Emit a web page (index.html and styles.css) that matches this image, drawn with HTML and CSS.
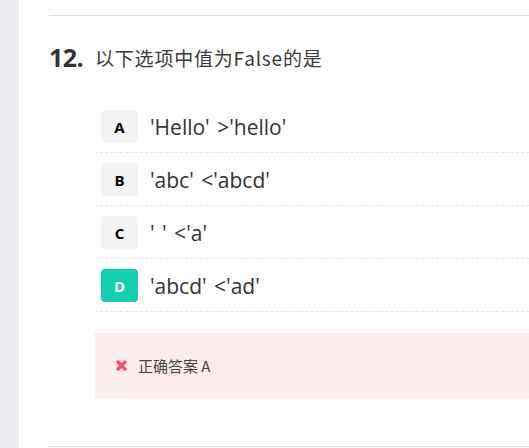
FILE: index.html
```html
<!DOCTYPE html>
<html lang="zh-CN">
<head>
<meta charset="utf-8">
<link rel="stylesheet" href="styles.css">
</head>
<body>
<div class="page">
  <aside class="side"></aside>
  <main class="main">
    <section class="question">
      <div class="q-head">
        <span class="q-num">12.</span>
        <span class="q-title">以下选项中值为False的是</span>
      </div>
      <ul class="options">
        <li class="option"><span class="badge">A</span><span class="opt-text">'Hello' &gt;'hello'</span></li>
        <li class="option"><span class="badge">B</span><span class="opt-text">'abc' &lt;'abcd'</span></li>
        <li class="option"><span class="badge">C</span><span class="opt-text">' ' &lt;'a'</span></li>
        <li class="option"><span class="badge badge-on">D</span><span class="opt-text">'abcd' &lt;'ad'</span></li>
      </ul>
      <div class="answer">
        <svg class="x-icon" width="11" height="11" viewBox="0 0 11 11"><path d="M2 2 L9 9 M9 2 L2 9" stroke="#fd4a68" stroke-width="3.2" stroke-linecap="round"/></svg>
        <span class="answer-text">正确答案 A</span>
      </div>
    </section>
  </main>
</div>
</body>
</html>
```
FILE: styles.css
```css
html, body {
  margin: 0;
  padding: 0;
  background: #fff;
}
body {
  font-family: "Open Sans", "Noto Sans CJK SC", sans-serif;
  color: #333;
  overflow: hidden;
}
.page {
  display: flex;
  height: 448px;
}
.side {
  width: 19px;
  flex: none;
  background: linear-gradient(to right, #ebecf0 0, #ebecf0 10px, #edeef2 19px);
}
.main {
  flex: 1;
  padding: 15px 0 0 30px;
  min-width: 0;
}
.question {
  border-top: 1px solid #e0e0e0;
  padding-top: 26px;
  height: 432px;
  box-sizing: border-box;
  border-bottom: 1px solid #e0e0e0;
}
.q-head {
  display: flex;
  align-items: center;
  height: 30px;
}
.q-num {
  font-size: 25px;
  font-weight: 700;
  color: #333;
  width: 46px;
  letter-spacing: -0.5px;
}
.q-title {
  font-family: "Noto Sans CJK SC", sans-serif;
  font-size: 19px;
  color: #3a3a3a;
  letter-spacing: 0.8px;
}
.options {
  list-style: none;
  margin: 28px 0 0 46px;
  padding: 0;
}
.option {
  display: flex;
  align-items: center;
  gap: 12px;
  padding: 10px 0 9px 6px;
  border-bottom: 1px dashed #e6e6e6;
}
.badge {
  width: 37px;
  height: 33px;
  border-radius: 4px;
  background: #f4f4f4;
  color: #000;
  font-family: "Open Sans", sans-serif;
  font-weight: 700;
  font-size: 15px;
  display: flex;
  align-items: center;
  justify-content: center;
  flex: none;
}
.badge-on {
  background: #13cfb0;
  color: #fff;
}
.opt-text {
  font-size: 21px;
  color: #333;
  white-space: pre;
  word-spacing: 2px;
}
.answer {
  margin: 21px 0 0 46px;
  height: 65px;
  background: #fdecec;
  display: flex;
  align-items: center;
  padding-left: 21px;
  gap: 11px;
}
.x-icon {
  flex: none;
}
.answer-text {
  font-family: "Noto Sans CJK SC", sans-serif;
  font-size: 15px;
  color: #444;
}
```
